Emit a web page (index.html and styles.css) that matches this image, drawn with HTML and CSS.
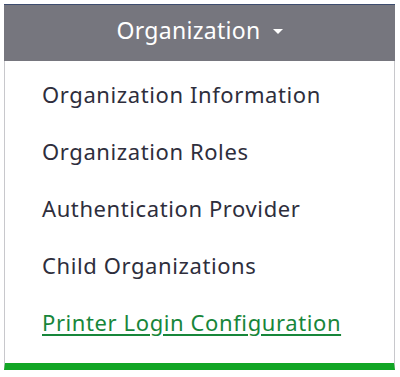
FILE: index.html
```html
<!DOCTYPE html>
<html>
<head>
<meta charset="utf-8">
<link rel="stylesheet" href="styles.css">
</head>
<body>
<div class="dropdown">
  <div class="dropdown-header">
    <span class="dropdown-title">Organization</span>
    <span class="caret"></span>
  </div>
  <ul class="menu">
    <li class="menu-item">Organization Information</li>
    <li class="menu-item">Organization Roles</li>
    <li class="menu-item">Authentication Provider</li>
    <li class="menu-item">Child Organizations</li>
    <li class="menu-item"><a class="menu-link active" href="#">Printer Login Configuration</a></li>
  </ul>
</div>
</body>
</html>
```
FILE: styles.css
```css
html, body {
  margin: 0;
  padding: 0;
  background: #ffffff;
}
body {
  font-family: "Noto Sans", "Open Sans", sans-serif;
}
.dropdown {
  margin: 4px 0 0 4px;
  width: 391px;
}
.dropdown-header {
  height: 57px;
  box-sizing: border-box;
  padding-bottom: 7px;
  background: #76767e;
  border-top: 1px solid #3d4c6e;
  display: flex;
  align-items: center;
  justify-content: center;
  gap: 12px;
  color: #ffffff;
}
.dropdown-title {
  font-size: 23px;
  letter-spacing: 0.3px;
}
.caret {
  width: 0;
  height: 0;
  border-left: 5px solid transparent;
  border-right: 5px solid transparent;
  border-top: 5px solid #ffffff;
  margin-top: 3px;
}
.menu {
  list-style: none;
  margin: 0;
  padding: 4px 0 13px 0;
  border-left: 1px solid #c8c8cc;
  border-right: 1px solid #c8c8cc;
  border-bottom: 7px solid #12a625;
}
.menu-item {
  height: 57px;
  display: flex;
  align-items: center;
  padding-left: 37px;
  font-size: 22px;
  letter-spacing: 0.6px;
  color: #2e2e3c;
}
.menu-link {
  color: #17863a;
  text-decoration: underline;
  text-underline-offset: 3px;
}
```
